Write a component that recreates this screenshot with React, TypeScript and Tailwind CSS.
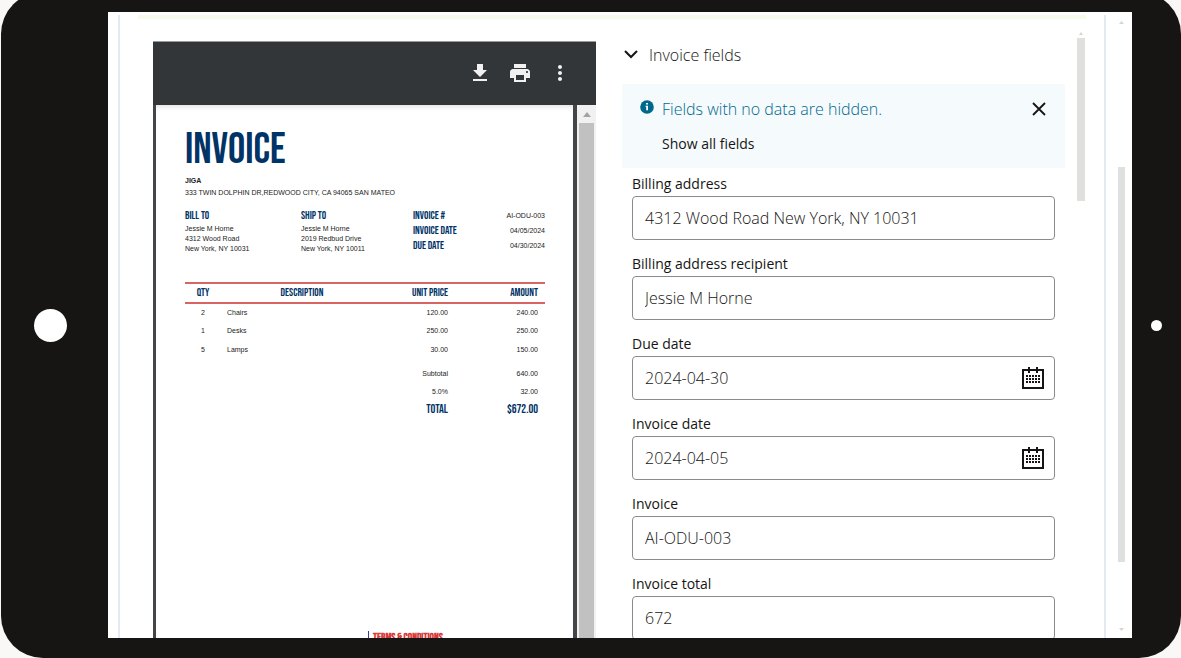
import React, { useState } from "react";

const lineItems = [
  { qty: 2, name: "Chairs", price: "120.00", amount: "240.00" },
  { qty: 1, name: "Desks", price: "250.00", amount: "250.00" },
  { qty: 5, name: "Lamps", price: "30.00", amount: "150.00" },
];

const fields = [
  { id: "billing-address", label: "Billing address", value: "4312 Wood Road New York, NY 10031" },
  { id: "billing-recipient", label: "Billing address recipient", value: "Jessie M Horne" },
  { id: "due-date", label: "Due date", value: "2024-04-30", date: true },
  { id: "invoice-date", label: "Invoice date", value: "2024-04-05", date: true },
  { id: "invoice", label: "Invoice", value: "AI-ODU-003" },
  { id: "invoice-total", label: "Invoice total", value: "672" },
];

const display =
  "font-['Bebas_Neue','Roboto_Condensed','Liberation_Sans_Narrow','Liberation_Sans',sans-serif] font-normal text-[#003366]";

function CalendarIcon() {
  const columns = [4, 7, 10, 13, 16];
  const rows = [8, 11, 14];
  return (
    <svg width="22" height="22" viewBox="0 0 22 22" shapeRendering="crispEdges" aria-hidden="true">
      <path d="M1 3h20v18H1z" fill="none" stroke="#161513" strokeWidth="2" />
      <path d="M6 0h2v6H6zM14 0h2v6h-2z" fill="#161513" />
      {rows.map((y) => columns.map((x) => <rect key={`${x}-${y}`} x={x} y={y} width="2" height="2" fill="#161513" />))}
    </svg>
  );
}

function ToolbarButton({ label, path }: { label: string; path: string }) {
  return (
    <button type="button" aria-label={label} className="size-6">
      <svg width="24" height="24" viewBox="0 0 24 24" fill="#f1f1f1" aria-hidden="true">
        <path d={path} />
      </svg>
    </button>
  );
}

function Address({ title, lines }: { title: string; lines: string[] }) {
  return (
    <div>
      <h3 className={`${display} text-[11px] leading-4`}>{title}</h3>
      {lines.map((line) => (
        <p key={line} className="leading-[10px]">{line}</p>
      ))}
    </div>
  );
}

function InvoiceDocument() {
  return (
    <article className="flex-1 bg-white pt-5 pr-7 pl-[29px] font-['Liberation_Sans',Arial,sans-serif] text-[7px] text-[#222] shadow-[inset_0_5px_5px_-3px_rgba(0,0,0,0.12)]">
      <h1 className={`${display} text-[43px] leading-[50px]`}>INVOICE</h1>
      <p className="pt-px font-bold leading-[10px]">JIGA</p>
      <p className="leading-[14px]">333 TWIN DOLPHIN DR,REDWOOD CITY, CA 94065 SAN MATEO</p>
      <div className="mt-2 grid grid-cols-[116fr_112fr_132fr]">
        <Address title="BILL TO" lines={["Jessie M Horne", "4312 Wood Road", "New York, NY 10031"]} />
        <Address title="SHIP TO" lines={["Jessie M Horne", "2019 Redbud Drive", "New York, NY 10011"]} />
        <dl className="leading-[15px]">
          {[
            ["INVOICE #", "AI-ODU-003"],
            ["INVOICE DATE", "04/05/2024"],
            ["DUE DATE", "04/30/2024"],
          ].map(([term, value]) => (
            <div key={term} className="flex justify-between">
              <dt className={`${display} text-[11px]`}>{term}</dt>
              <dd>{value}</dd>
            </div>
          ))}
        </dl>
      </div>
      <table className="mt-7 w-full table-fixed">
        <colgroup>
          <col className="w-[10%]" />
          <col className="w-[45%]" />
          <col className="w-[20%]" />
          <col className="w-[25%]" />
        </colgroup>
        <thead>
          <tr className={`${display} h-5 border-y-2 border-[#d96464] text-[11px] leading-4`}>
            <th className="font-normal">QTY</th>
            <th className="font-normal">DESCRIPTION</th>
            <th className="pr-[7px] text-right font-normal">UNIT PRICE</th>
            <th className="pr-[7px] text-right font-normal">AMOUNT</th>
          </tr>
        </thead>
        <tbody>
          {lineItems.map((item) => (
            <tr key={item.name} className="h-[19px]">
              <td className="text-center">{item.qty}</td>
              <td className="pl-1.5">{item.name}</td>
              <td className="pr-[7px] text-right">{item.price}</td>
              <td className="pr-[7px] text-right">{item.amount}</td>
            </tr>
          ))}
        </tbody>
        <tfoot className="text-right">
          <tr className="h-6">
            <td colSpan={3} className="pt-1 pr-[7px]">Subtotal</td>
            <td className="pt-1 pr-[7px]">640.00</td>
          </tr>
          <tr className="h-[17px]">
            <td colSpan={3} className="pr-[7px]">5.0%</td>
            <td className="pr-[7px]">32.00</td>
          </tr>
          <tr className={`${display} h-[18px] text-[12px] leading-[18px]`}>
            <td colSpan={3} className="pr-[7px]">TOTAL</td>
            <td className="pr-[7px]">$672.00</td>
          </tr>
        </tfoot>
      </table>
      <div className="mt-[212px] ml-[183px] border-l border-[#3a3aa8] pl-1">
        <h3 className="font-['Bebas_Neue','Roboto_Condensed','Liberation_Sans_Narrow','Liberation_Sans',sans-serif] text-[11px] leading-[13px] font-bold text-[#d63b3b]">
          TERMS &amp; CONDITIONS
        </h3>
      </div>
    </article>
  );
}

function PdfViewer() {
  return (
    <section aria-label="Invoice preview" className="mt-[22px] flex min-w-0 flex-1 flex-col bg-[#424649]">
      <div className="flex h-16 shrink-0 items-center justify-end gap-4 border-t border-[#999] bg-[#323639] pr-6 pb-0.5">
        <ToolbarButton label="Download" path="M5 20h14v-2H5v2zM19 9h-4V3H9v6H5l7 7 7-7z" />
        <ToolbarButton
          label="Print"
          path="M19 8H5c-1.66 0-3 1.34-3 3v6h4v4h12v-4h4v-6c0-1.66-1.34-3-3-3zm-3 11H8v-5h8v5zm3-7c-.55 0-1-.45-1-1s.45-1 1-1 1 .45 1 1-.45 1-1 1zm-1-9H6v4h12V3z"
        />
        <ToolbarButton
          label="More options"
          path="M12 8c1.1 0 2-.9 2-2s-.9-2-2-2-2 .9-2 2 .9 2 2 2zm0 2c-1.1 0-2 .9-2 2s.9 2 2 2 2-.9 2-2-.9-2-2-2zm0 6c-1.1 0-2 .9-2 2s.9 2 2 2 2-.9 2-2-.9-2-2-2z"
        />
      </div>
      <div className="flex flex-1 pl-[3px]">
        <div className="mr-1 flex min-w-0 flex-1 flex-col">
          <InvoiceDocument />
        </div>
        <div className="flex w-[19px] flex-col items-center bg-[#f1f1f1]">
          <svg width="8" height="18" viewBox="0 0 8 18" fill="#a3a3a3" aria-hidden="true">
            <path d="M0 12l4-5 4 5z" />
          </svg>
          <div className="w-[15px] flex-1 bg-[#c1c1c1]" />
        </div>
      </div>
    </section>
  );
}

function FieldsPanel() {
  const [open, setOpen] = useState(true);
  const [notice, setNotice] = useState(true);
  return (
    <section className="min-w-0 flex-1 pt-6">
      <button type="button" aria-expanded={open} onClick={() => setOpen(!open)} className="flex items-center gap-2.5 text-[16px] leading-6 font-light">
        <svg width="16" height="10" viewBox="0 0 16 10" fill="none" stroke="#161513" strokeWidth="2" className="ml-px" aria-hidden="true">
          <path d="M2 1l6 6 6-6" />
        </svg>
        Invoice fields
      </button>
      {notice && (
        <div className="mt-[17px] flex h-[84px] items-start bg-[#f5fafd] pt-[13px] pr-4 pl-[18px]">
          <svg width="14" height="14" viewBox="0 0 14 14" className="mt-[3px] mr-2" aria-hidden="true">
            <circle cx="7" cy="7" r="6.8" fill="#00688c" />
            <path d="M6 3h2v1.6H6zM5.5 5.8H8v4.4H6.2V6.8h-.7z" fill="#fff" />
          </svg>
          <div className="flex-1">
            <p className="text-[16px] leading-6 font-light text-[#00688c]">Fields with no data are hidden.</p>
            <button type="button" className="mt-[13px] block text-[14px] leading-5 font-medium">Show all fields</button>
          </div>
          <button type="button" aria-label="Dismiss" onClick={() => setNotice(false)} className="mt-[3px] mr-px">
            <svg width="18" height="18" viewBox="0 0 18 18" stroke="#161513" strokeWidth="1.8" aria-hidden="true">
              <path d="M3 3l12 12M15 3L3 15" />
            </svg>
          </button>
        </div>
      )}
      {open && (
        <div className="flex flex-col gap-3.5 px-2.5 pt-1.5">
          {fields.map((field) => (
            <div key={field.id}>
              <label htmlFor={field.id} className="block pb-0.5 text-[14px] leading-5 font-medium">{field.label}</label>
              <div className="flex h-11 items-center rounded-[4px] border border-[#8b8b8b] bg-white pr-2.5 pl-3">
                <input id={field.id} defaultValue={field.value} className="min-w-0 flex-1 bg-transparent text-[16px] leading-6 font-light outline-none" />
                {field.date && (
                  <button type="button" aria-label={`Select ${field.label.toLowerCase()}`}>
                    <CalendarIcon />
                  </button>
                )}
              </div>
            </div>
          ))}
        </div>
      )}
    </section>
  );
}

export default function App() {
  return (
    <div className="h-screen overflow-hidden bg-[#faf8f7] pl-px font-['Open_Sans','Noto_Sans',sans-serif] text-[#161513]">
      <div className="-mt-2 flex h-[calc(100vh+8px)] rounded-[42px] bg-[#161513] pt-5 pb-5">
        <div className="flex w-[107px] shrink-0 items-center pl-[33px]">
          <div className="size-[33px] rounded-full bg-white" />
        </div>
        <main className="flex min-w-0 flex-1 overflow-hidden bg-white pl-2.5">
          <div className="mt-[3px] flex min-w-0 flex-1 flex-col border-x-2 border-[#e4eaf0]">
            <div className="mx-[18px] h-1 shrink-0 bg-[#f5fcea]" />
            <div className="flex min-h-0 flex-1 overflow-hidden pl-[33px]">
              <PdfViewer />
              <div className="w-[26px] shrink-0" />
              <FieldsPanel />
              <div className="mr-[19px] ml-3 flex w-2 shrink-0 flex-col items-center pt-3">
                <svg width="4" height="7" viewBox="0 0 4 7" fill="#d5d5d3" aria-hidden="true">
                  <path d="M0 4l2-3 2 3z" />
                </svg>
                <div className="h-[163px] w-2 bg-[#e0e0de]" />
              </div>
            </div>
          </div>
          <div className="flex w-[26px] shrink-0 flex-col items-center pt-2 pb-1.5 pl-1">
            <svg width="5" height="4" viewBox="0 0 5 4" fill="#d5d5d3" aria-hidden="true">
              <path d="M0 4l2.500-3 2.500 3z" />
            </svg>
            <div className="flex-[143]" />
            <div className="w-[7px] flex-[395] bg-[#e0e0de]" />
            <div className="flex-[66]" />
            <svg width="5" height="4" viewBox="0 0 5 4" fill="#d5d5d3" aria-hidden="true">
              <path d="M0 0l2.500 3 2.500-3z" />
            </svg>
          </div>
        </main>
        <div className="flex w-[49px] shrink-0 items-center justify-center">
          <div className="size-[11px] rounded-full bg-white" />
        </div>
      </div>
    </div>
  );
}
